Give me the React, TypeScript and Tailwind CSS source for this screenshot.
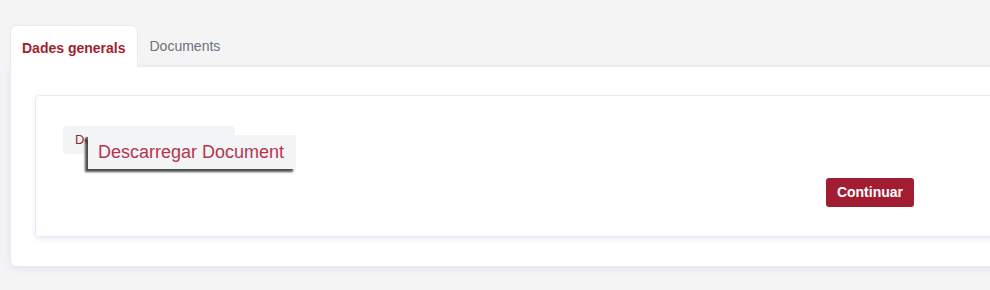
import { useState } from 'react';

const tabs = ['Dades generals', 'Documents'];

export default function App() {
  const [active, setActive] = useState(0);

  return (
    <div className="h-[290px] w-[990px] overflow-hidden bg-[#f4f4f5] font-['Liberation_Sans',Arial,sans-serif]">
      <div className="w-[1040px] pl-[10px] pt-[25px]">
        <div className="flex items-end">
          {tabs.map((tab, i) =>
            i === active ? (
              <button
                key={tab}
                onClick={() => setActive(i)}
                className="relative z-10 -mb-px h-[42px] rounded-t-md border border-b-0 border-[#e6eaf4] bg-white px-[11px] pt-[3px] text-[14px] font-bold text-[#a31d32]"
              >
                {tab}
              </button>
            ) : (
              <button
                key={tab}
                onClick={() => setActive(i)}
                className="h-[41px] px-3 pt-[2px] text-[14px] text-[#6b7280]"
              >
                {tab}
              </button>
            )
          )}
        </div>

        <div className="rounded-bl-md border border-[#e6eaf4] bg-white pb-[29px] pl-[24px] pt-[28px] shadow-[0_2px_6px_rgba(180,190,215,0.25)]">
          <div className="rounded-[4px] border border-[#e6eaf4] bg-white pb-[29px] pl-[27px] pt-[30px] shadow-[0_2px_5px_rgba(180,190,215,0.3)]">
            <div className="w-[851px]">
              <div className="relative h-[28px] w-[172px] rounded-[4px] bg-[#f3f4f6]">
                <span className="absolute left-[12px] top-[6px] text-[13px] leading-4 text-[#a31d32]">
                  Descarregar Document
                </span>
                <div className="absolute left-[25px] top-[9px] z-10 flex h-[34px] items-center whitespace-nowrap bg-[#f3f4f6] pl-[10px] pr-[12px] text-[18px] text-[#b3364e] shadow-[-3px_3px_2px_rgba(60,60,60,0.9)]">
                  Descarregar Document
                </div>
              </div>
              <div className="mt-[24px] flex justify-end">
                <button className="h-[29px] rounded-[3px] bg-[#a31d32] px-[11px] text-[14px] font-bold text-white">
                  Continuar
                </button>
              </div>
            </div>
          </div>
        </div>
      </div>
    </div>
  );
}
